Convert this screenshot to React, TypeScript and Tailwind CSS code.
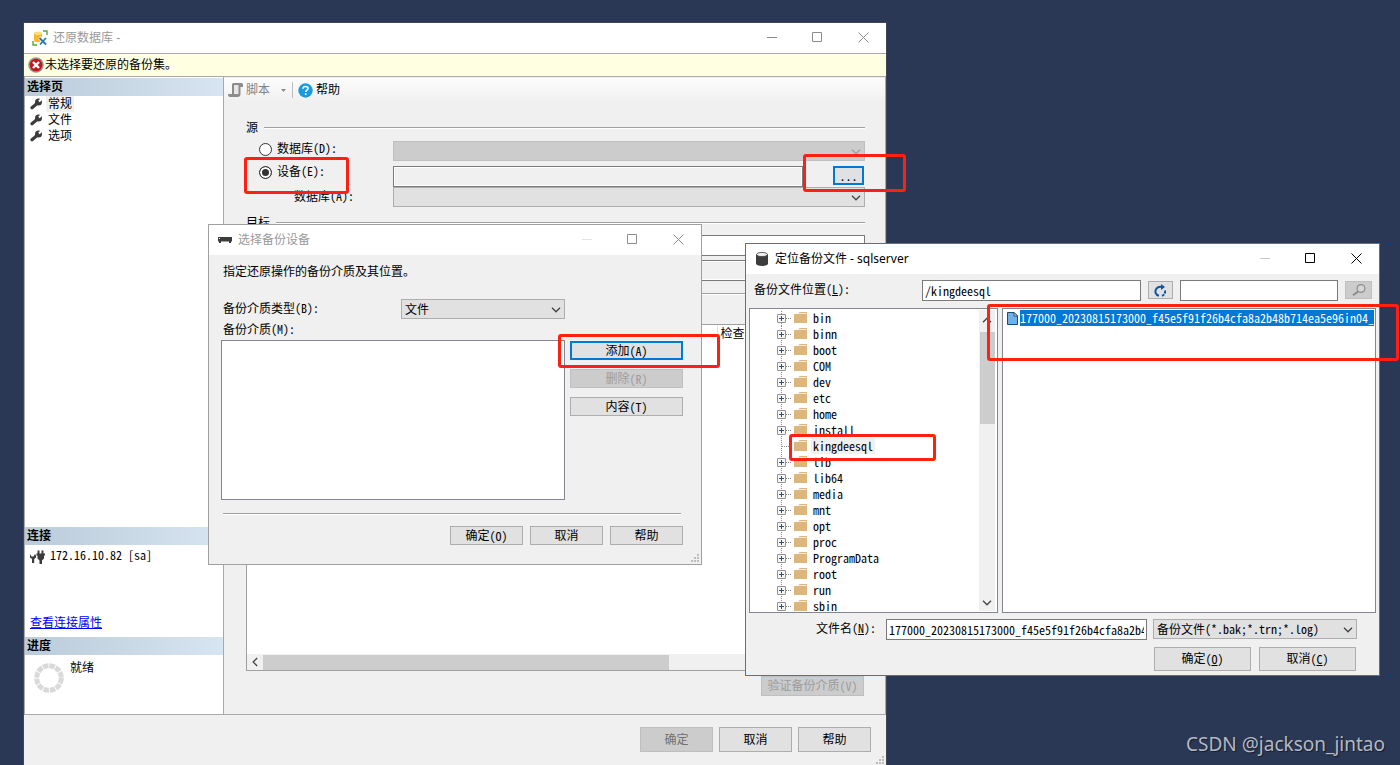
import type { ReactNode } from "react";
import clsx from "clsx";

const folders = [
    "bin", "binn", "boot", "COM", "dev", "etc", "home", "install", "kingdeesql", "lib",
    "lib64", "media", "mnt", "opt", "proc", "ProgramData", "root", "run", "sbin",
];

const pages = ["常规", "文件", "选项"];

const BACKUP_FILE = "177000_20230815173000_f45e5f91f26b4cfa8a2b48b714ea5e96in04_";

const ui = "font-['Liberation_Sans','Noto_Sans_CJK_SC',sans-serif]";
const mono = "font-['Noto_Sans_Mono_CJK_SC','Liberation_Mono',monospace] text-xs";

function Key({ k, underline, colon }: { k: string; underline?: boolean; colon?: boolean }) {
    return (
        <span className={clsx(mono, "leading-none")}>
            ({underline ? <u>{k}</u> : k}){colon && ":"}
        </span>
    );
}

function Chevron({ className }: { className?: string }) {
    return (
        <svg viewBox="0 0 10 6" className={clsx("w-[10px] h-[6px]", className)} fill="none" stroke="currentColor" strokeWidth="1.3">
            <path d="M1 .8 5 4.8 9 .8" />
        </svg>
    );
}

function Button({ children, className, disabled, focus }: { children: ReactNode; className?: string; disabled?: boolean; focus?: boolean }) {
    return (
        <button
            type="button"
            disabled={disabled}
            className={clsx(
                "flex items-center justify-center text-xs leading-4 whitespace-nowrap",
                disabled ? "bg-[#cccccc] border border-[#bfbfbf] text-[#9c9c9c]" : "bg-[#e1e1e1]",
                !disabled && (focus ? "border-2 border-[#0078d7]" : "border border-[#adadad]"),
                className
            )}
        >
            {children}
        </button>
    );
}

function Select({ value, label, id, className, disabled }: { value: string; label?: string; id?: string; className?: string; disabled?: boolean }) {
    return (
        <div className={clsx("relative", className)}>
            <select
                id={id}
                aria-label={label}
                disabled={disabled}
                className={clsx(
                    "block appearance-none w-full h-5 pl-[3px] border text-xs leading-4 font-['Noto_Sans_Mono_CJK_SC','Noto_Sans_CJK_SC',sans-serif] opacity-100",
                    disabled ? "bg-[#cccccc] border-[#bfbfbf]" : "bg-[#e1e1e1] border-[#adadad]"
                )}
            >
                <option>{value}</option>
            </select>
            <Chevron className={clsx("absolute right-1 top-2 pointer-events-none", disabled ? "text-[#a0a0a0]" : "text-[#444444]")} />
        </div>
    );
}

function WindowControls({ color, minColor }: { color: string; minColor: string }) {
    return (
        <div className="ml-auto flex pb-px">
            <button type="button" aria-label="最小化" className={clsx("w-[46px] flex justify-center", minColor)}>
                <svg className="size-[11px]" viewBox="0 0 11 11" stroke="currentColor"><path d="M0 5.5h10" /></svg>
            </button>
            <button type="button" aria-label="最大化" className={clsx("w-[45px] flex justify-center", color)}>
                <svg className="size-[11px]" viewBox="0 0 11 11" fill="none" stroke="currentColor"><path d="M.5 .5h9v9h-9z" /></svg>
            </button>
            <button type="button" aria-label="关闭" className={clsx("w-[46px] flex justify-center", color)}>
                <svg className="size-[11px]" viewBox="0 0 11 11" stroke="currentColor"><path d="M.5 .5l10 10M10.5 .5l-10 10" /></svg>
            </button>
        </div>
    );
}

function Group({ title }: { title?: string }) {
    return (
        <div className="flex items-center h-4 gap-[6px]">
            {title && <span>{title}</span>}
            <span className="flex-1 h-[2px] bg-white border-t border-[#a0a0a0]" />
        </div>
    );
}

function PaneHeader({ children }: { children: ReactNode }) {
    return (
        <h2 className="h-[18px] pl-[2px] font-bold leading-[18px] bg-linear-to-r from-[#bccbd9] to-[#d7e5f2]">{children}</h2>
    );
}

function Grip() {
    return (
        <svg className="absolute right-[2px] bottom-[2px] size-2" viewBox="0 0 8 8" fill="#bdbdbd">
            <path d="M6 0h2v2h-2zM3 3h2v2h-2zM6 3h2v2h-2zM0 6h2v2h-2zM3 6h2v2h-2zM6 6h2v2h-2z" />
        </svg>
    );
}

function Wrench() {
    return (
        <svg className="w-[13px] h-[12px]" viewBox="0 0 13 12" fill="none">
            <path d="M2 9.800 7 5.600" stroke="#3c3c3c" strokeWidth="3.200" strokeLinecap="round" />
            <circle cx="8.500" cy="4" r="3.500" fill="#3c3c3c" />
            <path d="M9 3.600 12.500 0" stroke="#fff" strokeWidth="2.200" />
        </svg>
    );
}

function TreeGlyph({ leaf, first }: { leaf: boolean; first: boolean }) {
    return (
        <svg className="w-[31px] h-4 shrink-0" viewBox="0 0 31 16" fill="none">
            <path d={first ? "M4.5 1v15" : "M4.5 0v16"} stroke="#8a8a8a" strokeDasharray="1 1" />
            <path d="M5 8.5h9" stroke="#8a8a8a" strokeDasharray="1 1" />
            {!leaf && (
                <>
                    <rect x=".5" y="4.5" width="8" height="8" rx=".5" fill="#f6f6f6" stroke="#919191" />
                    <path d="M2 8.5h5M4.5 6v5" stroke="#2b4a9b" />
                </>
            )}
            <path d="M17 4h4l1.500-2H30v11H17z" fill="#dcb67a" />
            <path d="M21.500 3.500h8" stroke="#f6ead4" />
        </svg>
    );
}

function RestoreWindow() {
    return (
        <section className="absolute left-6 top-[23px] w-[862px] bg-[#f0f0f0] outline outline-[#404652]">
            <header className="flex items-center h-[30px] pl-2 bg-white text-[#999999]">
                <svg className="size-4" viewBox="0 0 16 16" fill="none">
                    <path d="M2 3.5v7c0 1 1.500 1.700 4 1.700s4-.7 4-1.700v-7z" fill="#f5b92e" />
                    <ellipse cx="6" cy="3.300" rx="4" ry="1.800" fill="#ffdc7c" />
                    <path d="M11 1h4v4M1 11v4h4" stroke="#5aa832" strokeWidth="1.400" />
                    <path d="M7.500 7.500l6.500 7M14 7.500l-6 7" stroke="#fff" strokeWidth="3.500" />
                    <path d="M7.500 8l6.500 6.500M14 8l-6 6.500" stroke="#2478bd" strokeWidth="1.800" />
                </svg>
                <h1 className="ml-[5px] text-xs">还原数据库 -</h1>
                <WindowControls color="text-[#8c8c8c]" minColor="text-[#8c8c8c]" />
            </header>
            <div className="flex items-center h-6 pl-1 border-y border-[#a9a9ad] bg-[#ffffe1]">
                <svg className="size-4" viewBox="0 0 16 16">
                    <circle cx="8" cy="8" r="7.800" fill="#9a9a9a" />
                    <circle cx="8" cy="8" r="6.300" fill="#c3161c" />
                    <path d="M5 5l6 6M11 5l-6 6" stroke="#fff" strokeWidth="2.400" />
                </svg>
                <span className="ml-px">未选择要还原的备份集。</span>
            </div>

            <div className="flex border-x border-b border-[#a9a9ad]">
                <aside className="flex flex-col w-[199px] pt-px bg-white border-r border-[#a9a9ad]">
                    <PaneHeader>选择页</PaneHeader>
                    <ul>
                        {pages.map((page, i) => (
                            <li key={page} className="flex items-center h-4 pl-[5px] gap-[3px]">
                                <Wrench />
                                <span className={clsx("px-[2px]", i === 0 && "bg-[#f0f0f0]")}>{page}</span>
                            </li>
                        ))}
                    </ul>
                    <div className="mt-auto">
                        <PaneHeader>连接</PaneHeader>
                        <div className="flex flex-col h-[92px] pl-[5px] pt-[2px] pb-[6px]">
                            <div className="flex items-start gap-[5px]">
                                <svg className="mt-[2px] w-[15px] h-4" viewBox="0 0 15 16" fill="#3c3c3c">
                                    <path d="M0 5l1.500 2.500h2L5 5l1 1.500v2L4.200 10v4H2v-4L0 8.500zM7.500 1.500h2v3h2v-3h2v3H15v2h-1v3l-2 2V15h-2.500v-3.500l-2-2v-3H6.500v-2h1z" />
                                </svg>
                                <span className={mono}>172.16.10.82 [sa]</span>
                            </div>
                            <a href="#connection" className="mt-auto self-start text-[#0000ff] underline">查看连接属性</a>
                        </div>
                        <PaneHeader>进度</PaneHeader>
                        <div className="flex h-[59px] pl-[9px] pt-[5px] gap-[6px]">
                            <svg className="mt-[3px] size-[30px]" viewBox="0 0 30 30" fill="none">
                                <circle cx="15" cy="15" r="12.300" stroke="#d9d9d9" strokeWidth="5" strokeDasharray="5.500 .94" />
                            </svg>
                            <span>就绪</span>
                        </div>
                    </div>
                </aside>

                <main className="flex-1 min-w-0 pt-px">
                    <div className="flex items-center h-6 pl-1 bg-linear-to-b from-[#fdfdfd] to-[#f0f0f0]">
                        <button type="button" disabled className="flex items-center text-[#838383]">
                            <svg className="size-4" viewBox="0 0 16 16" fill="#8c8c8c">
                                <path d="M4 3c0-1.500.7-2 2-2h7.500C14.500 1 15 1.700 15 3v2h-2.500v7c0 2-1 3-3 3H2c-1.300 0-2-1-2-3h4z" />
                                <path d="M6 3h4.500v9H6z" fill="#e6e6e6" />
                            </svg>
                            <span className="ml-[2px]">脚本</span>
                            <svg className="ml-[11px] w-[5px] h-[3px]" viewBox="0 0 5 3" fill="#8a8a8a"><path d="M0 0h5L2.500 3z" /></svg>
                        </button>
                        <span className="ml-[6px] mr-[5px] w-px h-4 bg-[#bdbdbd]" />
                        <button type="button" className="flex items-center gap-[3px]">
                            <svg className="size-[15px]" viewBox="0 0 15 15" fill="none">
                                <circle cx="7.500" cy="7.500" r="7.200" fill="#1a9be0" />
                                <path d="M5 5.700C5 4.200 6.100 3.500 7.500 3.500s2.500.8 2.500 2c0 1.600-2.300 1.600-2.300 3.500M7.700 10.300v1.700" stroke="#fff" strokeWidth="1.600" />
                            </svg>
                            帮助
                        </button>
                    </div>

                    <div className="pl-[22px] pr-5 pt-[18px] pb-[18px]">
                        <Group title="源" />
                        <div className="flex items-start mt-[5px]">
                            <div className="flex items-center gap-[5px] w-[147px] h-4 pl-[13px]">
                                <input id="src-db" type="radio" name="source" className="appearance-none size-[13px] rounded-full border border-[#333333] bg-white" />
                                <label htmlFor="src-db">数据库<Key k="D" colon /></label>
                            </div>
                            <Select label="源数据库" value="" disabled className="flex-1" />
                        </div>
                        <div className="flex items-start mt-[5px]">
                            <div className="flex items-center gap-[5px] w-[147px] h-3 pl-[13px]">
                                <input id="src-device" type="radio" name="source" defaultChecked className="appearance-none size-[13px] rounded-full border border-[#333333] bg-[#333333] shadow-[inset_0_0_0_2px_white]" />
                                <label htmlFor="src-device">设备<Key k="E" colon /></label>
                            </div>
                            <input aria-label="设备" readOnly className="flex-1 h-[21px] mr-[30px] border border-[#7a7a7a] bg-[#f0f0f0] shadow-[inset_0_0_0_1px_white]" />
                            <Button focus className="w-[31px] h-[19px] mr-px"><span className={mono}>...</span></Button>
                        </div>
                        <div className="flex items-center">
                            <label htmlFor="device-db" className="w-[147px] pl-12">数据库<Key k="A" colon /></label>
                            <Select id="device-db" value="" className="flex-1" />
                        </div>
                        <div className="mt-2"><Group title="目标" /></div>
                        <input aria-label="目标数据库" className="block ml-auto mt-1 w-[472px] h-[21px] border border-[#7a7a7a] bg-white" />
                        <input aria-label="还原到" readOnly className="block ml-auto mt-1 w-[472px] h-[21px] border border-[#7a7a7a] bg-[#f0f0f0] shadow-[inset_0_0_0_1px_white]" />
                        <div className="mt-[5px]"><Group /></div>
                        <div className="flex flex-col mt-[22px] h-[347px] border border-[#a0a0a0] bg-white">
                            <table className="w-full text-left">
                                <thead>
                                    <tr className="h-[18px]">
                                        <th className="w-[470px] border-r border-[#e5e5e5]" />
                                        <th className="pl-[3px] font-normal">检查</th>
                                    </tr>
                                </thead>
                            </table>
                            <div className="mt-auto flex items-center h-[16px] bg-[#f0f0f0]">
                                <Chevron className="mx-[3px] rotate-90 text-[#444444]" />
                                <span className="w-[406px] h-[15px] bg-[#cdcdcd]" />
                            </div>
                        </div>
                        <Button disabled className="ml-auto mr-px mt-[5px] w-[103px] h-5">验证备份介质<Key k="V" /></Button>
                    </div>
                </main>
            </div>

            <footer className="flex justify-end gap-[6px] h-[51px] pt-3 pr-[15px]">
                <Button disabled className="w-[73px] h-[25px] text-[#707070]">确定</Button>
                <Button className="w-[73px] h-[25px]">取消</Button>
                <Button className="w-[73px] h-[25px]">帮助</Button>
            </footer>
            <Grip />
        </section>
    );
}

function DeviceDialog() {
    return (
        <section className="absolute left-52 top-56 w-[494px] border border-[#a0a0a0] bg-[#f0f0f0]">
            <header className="flex items-center h-[30px] pl-[9px] bg-white text-[#999999]">
                <svg className="w-[14px] h-[6px]" viewBox="0 0 14 6" fill="#3c3c3c">
                    <path d="M0 0h14v4.500h-1V6h-2V4.500H3V6H1V4.500H0z" />
                    <path d="M1 1h1v1H1z" fill="#fff" />
                </svg>
                <h2 className="ml-[6px] text-xs">选择备份设备</h2>
                <WindowControls color="text-[#8c8c8c]" minColor="text-[#e3e3e3]" />
            </header>
            <div className="pl-3 pr-[18px] pt-[9px] pb-[19px]">
                <p className="pl-[2px]">指定还原操作的备份介质及其位置。</p>
                <div className="flex items-center mt-[19px] pl-[2px]">
                    <label htmlFor="media-type" className="w-[178px]">备份介质类型<Key k="B" colon /></label>
                    <Select id="media-type" value="文件" className="w-[164px]" />
                </div>
                <div className="mt-[3px] pl-[2px]" id="media-label">备份介质<Key k="M" colon /></div>
                <div className="flex gap-[5px] mt-[2px]">
                    <div role="listbox" aria-labelledby="media-label" className="flex-1 h-40 border border-[#828790] bg-white" />
                    <div className="flex flex-col gap-[9px] pt-px w-[113px]">
                        <Button focus className="h-[19px]">添加<Key k="A" /></Button>
                        <Button disabled className="h-[19px]">删除<Key k="R" /></Button>
                        <Button className="h-[19px]">内容<Key k="T" /></Button>
                    </div>
                </div>
                <div className="h-[2px] mt-[13px] ml-[2px] mr-[2px] border-t border-[#a0a0a0] bg-white" />
                <div className="flex justify-end gap-[7px] mt-[11px]">
                    <Button className="w-[73px] h-[19px]">确定<Key k="O" /></Button>
                    <Button className="w-[73px] h-[19px]">取消</Button>
                    <Button className="w-[73px] h-[19px]">帮助</Button>
                </div>
            </div>
            <Grip />
        </section>
    );
}

function LocateDialog() {
    return (
        <section className="absolute left-[745px] top-[243px] w-[635px] border border-[#1883d7] bg-[#f0f0f0]">
            <header className="flex items-center h-[30px] pl-[10px] bg-white">
                <svg className="w-[12px] h-[14px]" viewBox="0 0 12 14">
                    <path d="M0 2.500v9C0 13 2.500 14 6 14s6-1 6-2.500v-9z" fill="#3c3c3c" />
                    <ellipse cx="6" cy="2.500" rx="5.500" ry="2.100" fill="#ededed" stroke="#3c3c3c" strokeWidth=".8" />
                </svg>
                <h2 className="ml-[7px] text-xs font-['Noto_Sans','Noto_Sans_CJK_SC',sans-serif]">定位备份文件 - sqlserver</h2>
                <WindowControls color="text-black" minColor="text-[#c8c8c8]" />
            </header>

            <div className="flex items-start gap-[7px] pt-[6px] pl-2 pr-[7px]">
                <label htmlFor="location" className="w-[161px] pt-[2px]">备份文件位置<Key k="L" underline colon /></label>
                <input id="location" defaultValue="/kingdeesql" className={clsx("flex-1 min-w-0 h-[21px] px-[2px] pb-px border border-[#7a7a7a] bg-white", mono)} />
                <Button className="mt-px w-[25px] h-[18px]">
                    <svg aria-label="刷新" className="w-[13px] h-[13px]" viewBox="0 0 13 13" fill="none" stroke="#0f55a5" strokeWidth="2">
                        <path d="M5 11.800C1.500 11 .8 7.500 2 5.300 3.200 3.300 5.200 2.500 8 3" />
                        <path d="M7 0l4 3-4 3z" fill="#0f55a5" stroke="none" />
                        <path d="M11 6.500c.5 2.500-.8 4.600-3 5.300" strokeDasharray="3 1" />
                    </svg>
                </Button>
                <input aria-label="搜索" className="w-[158px] h-[21px] border border-[#7a7a7a] bg-white" />
                <Button disabled className="mt-px w-[27px] h-[18px]">
                    <svg aria-label="查找" className="w-[14px] h-[12px]" viewBox="0 0 14 12" fill="none" stroke="#8c8c8c">
                        <circle cx="9" cy="4.500" r="3.900" fill="#d6d6d6" strokeWidth="1.200" />
                        <path d="M6.300 7.200 1 11.300" strokeWidth="2" />
                    </svg>
                </Button>
            </div>

            <div className="flex gap-1 h-[305px] mt-[7px] px-[3px]">
                <div className="flex w-[249px] border border-[#828790] bg-white p-px">
                    <ul className="flex-1 overflow-hidden pl-[26px]">
                        {folders.map((name, i) => (
                            <li key={name} className="flex items-center h-4">
                                <TreeGlyph leaf={name === "kingdeesql"} first={i === 0} />
                                <span className={clsx("ml-[3px] px-[2px]", mono, "leading-4", name === "kingdeesql" && "bg-[#f0f0f0]")}>{name}</span>
                            </li>
                        ))}
                    </ul>
                    <div className="flex flex-col items-center w-4 mr-px bg-[#f0f0f0]">
                        <Chevron className="mt-[7px] rotate-180 text-[#444444]" />
                        <span className="mt-[9px] w-[15px] h-[92px] bg-[#cdcdcd]" />
                        <Chevron className="mt-auto mb-[5px] text-[#444444]" />
                    </div>
                </div>
                <div className="flex-1 min-w-0 p-px border border-[#828790] bg-white">
                    <div className="flex items-center h-4 pl-[3px]">
                        <svg className="w-[11px] h-[13px] shrink-0" viewBox="0 0 11 13">
                            <path d="M.5 .5h6.500l3.500 3.500v8.500h-10z" fill="#6fb0e6" stroke="#1d4a73" />
                            <path d="M7 .5v3.500h3.500z" fill="#fff" stroke="#1d4a73" />
                        </svg>
                        <span className={clsx("ml-[2px] flex-1 whitespace-nowrap bg-[#0078d7] text-white", mono, "leading-4")}>{BACKUP_FILE}</span>
                    </div>
                </div>
            </div>

            <div className="flex justify-end mt-[6px] pr-[22px]">
                <label htmlFor="filename" className="mr-[10px] pt-[2px]">文件名<Key k="N" underline colon /></label>
                <input id="filename" defaultValue={BACKUP_FILE} className={clsx("w-[261px] h-[21px] mr-[6px] px-[2px] pb-px border border-[#7a7a7a] bg-white", mono)} />
                <Select label="文件类型" value="备份文件(*.bak;*.trn;*.log)" className="w-[204px]" />
            </div>
            <div className="flex justify-end gap-2 mt-[7px] pr-[23px] pb-1">
                <Button className="w-[97px] h-6">确定<Key k="O" underline /></Button>
                <Button className="w-[97px] h-6">取消<Key k="C" underline /></Button>
            </div>
        </section>
    );
}

// red marker boxes drawn over the windows
const marks = [
    "left-[244px] top-[157px] w-[105px] h-[37px]",
    "left-[803px] top-[154px] w-[103px] h-[38px]",
    "left-[558px] top-[334px] w-[162px] h-[34px]",
    "left-[987px] top-[304px] w-[412px] h-[57px]",
    "left-[789px] top-[434px] w-[147px] h-[27px]",
];

export default function App() {
    return (
        <div className={clsx("relative min-h-screen overflow-hidden bg-[#2a3855] text-xs leading-4 text-black", ui)}>
            <RestoreWindow />
            <DeviceDialog />
            <LocateDialog />
            {marks.map((mark) => (
                <div key={mark} className={clsx("absolute border-3 border-[#ff2012] rounded-[3px] pointer-events-none", mark)} />
            ))}
            <p className="absolute right-[15px] bottom-[9px] text-[19px] leading-6 text-[#b4b9c3] text-shadow-[1px_1px_1px_rgb(0_0_0/0.5)] font-['Noto_Sans',sans-serif]">CSDN @jackson_jintao</p>
        </div>
    );
}
